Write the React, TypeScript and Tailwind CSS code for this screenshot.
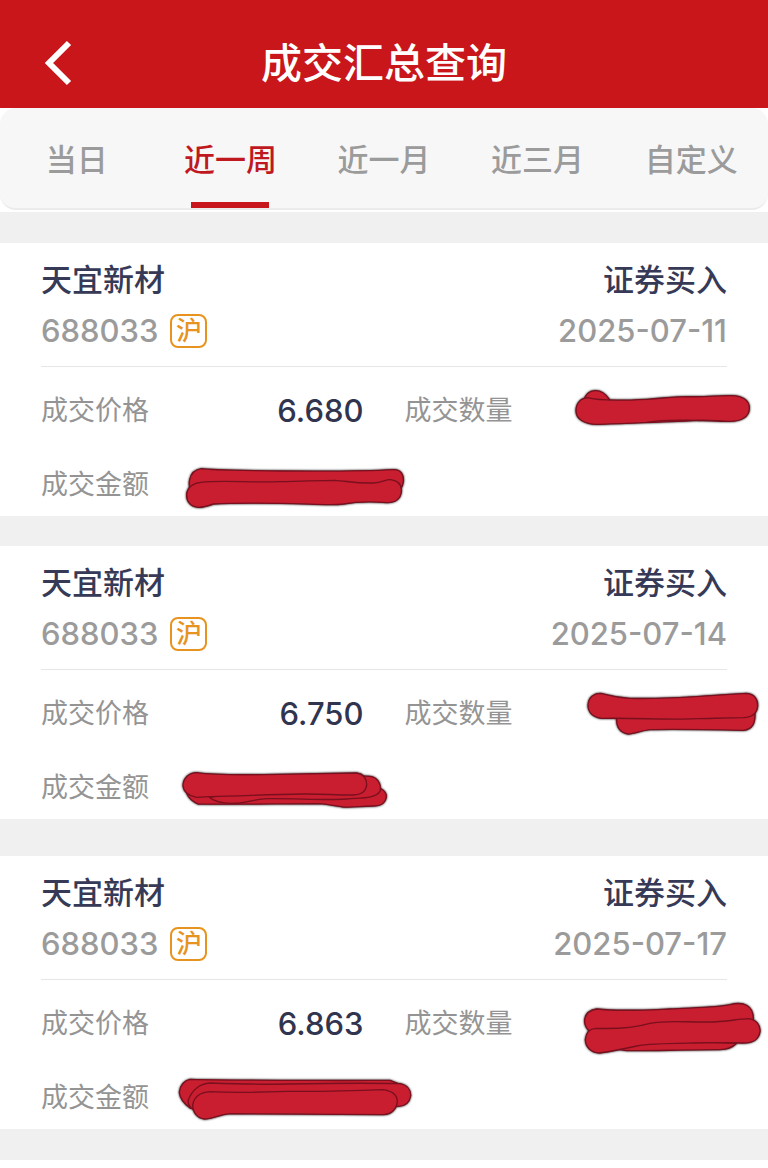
import React, { useState } from "react";

type Stroke = { d: string; seam?: boolean };
type Mark = { dx: number; dy: number; strokes: Stroke[] };

type Trade = {
  name: string;
  code: string;
  side: string;
  date: string;
  price: string;
  quantityMark: Mark;
  amountMark: Mark;
};

const TABS = ["当日", "近一周", "近一月", "近三月", "自定义"];

const TRADES: Trade[] = [
  {
    name: "天宜新材",
    code: "688033",
    side: "证券买入",
    date: "2025-07-11",
    price: "6.680",
    quantityMark: {
      dx: 0,
      dy: 0,
      strokes: [
        { d: "M72 60 C82 26 122 20 148 58 L140 80 L80 80 Z" },
        { d: "M82 53 C120 64 200 61 260 58 C320 54 340 50 390 50 C440 52 470 46 515 47 C550 48 569 62 568 86 C567 110 545 124 510 124 C470 124 440 118 400 122 C330 126 180 130 110 133 C75 133 48 118 48 92 C48 70 62 55 82 53 Z" },
        { d: "M260 127 C320 117 370 121 410 121 C440 124 460 119 490 124", seam: true },
      ],
    },
    amountMark: {
      dx: 0,
      dy: 3,
      strokes: [
        { d: "M95 41 C120 46 220 46 330 48 C450 49 600 48 670 44 C695 43 702 62 700 80 C698 100 690 110 670 112 L70 116 C50 100 52 46 95 41 Z" },
        { d: "M92 82 C160 74 240 84 330 80 C400 79 450 76 495 76 C540 80 560 85 610 84 C640 82 645 73 662 74 C688 78 696 92 694 110 C692 132 675 144 650 143 C600 139 560 140 520 147 C480 152 420 146 330 145 C250 144 180 144 130 147 C110 154 100 157 85 157 C62 155 49 140 50 118 C52 98 68 84 92 82 Z" },
      ],
    },
  },
  {
    name: "天宜新材",
    code: "688033",
    side: "证券买入",
    date: "2025-07-14",
    price: "6.750",
    quantityMark: {
      dx: 30,
      dy: -9,
      strokes: [
        { d: "M140 112 L555 98 C556 130 548 148 520 151 C420 149 320 147 240 149 C210 152 195 162 175 162 C150 158 138 140 140 112 Z" },
        { d: "M92 40 C115 45 130 53 180 55 C300 59 400 46 530 40 C553 42 564 58 563 78 C561 102 545 112 520 113 C480 113 430 115 380 116 C290 121 210 113 95 115 C70 112 54 98 54 76 C55 54 70 40 92 40 Z" },
      ],
    },
    amountMark: {
      dx: 0,
      dy: 9,
      strokes: [
        { d: "M50 100 L580 70 C625 80 650 88 649 110 C646 132 632 139 605 138 C570 139 545 143 520 141 C495 138 480 133 450 131 C350 131 170 134 85 132 C68 126 56 114 50 100 Z" },
        { d: "M118 112 C135 128 170 132 210 129 C245 124 255 118 290 116 C370 114 460 122 530 117 C575 113 615 116 630 94 C636 72 620 50 600 49 L560 47 Z" },
        { d: "M80 38 C120 44 200 45 280 44 C380 43 470 40 560 39 C584 42 590 58 590 75 C588 95 574 104 550 105 C500 106 460 101 400 102 C300 103 220 108 120 110 L80 112 C57 108 39 95 39 75 C41 54 56 39 80 38 Z" },
      ],
    },
  },
  {
    name: "天宜新材",
    code: "688033",
    side: "证券买入",
    date: "2025-07-17",
    price: "6.863",
    quantityMark: {
      dx: 0,
      dy: -9,
      strokes: [
        { d: "M160 176 L270 150 L530 160 C515 175 500 179 480 179 C380 179 260 183 200 182 Z" },
        { d: "M110 57 C180 65 260 60 330 57 C400 53 470 53 510 44 C550 34 582 45 580 90 L560 110 L90 125 C66 105 66 64 110 57 Z" },
        { d: "M108 115 C160 117 220 114 270 100 C320 90 380 97 440 96 C500 96 530 87 565 86 C588 88 602 105 600 125 C596 150 580 159 550 159 C500 157 440 158 400 159 C320 160 270 160 230 168 C190 177 160 183 118 189 C92 188 76 170 76 148 C78 128 90 116 108 115 Z" },
      ],
    },
    amountMark: {
      dx: 0,
      dy: -6,
      strokes: [
        { d: "M60 43 C180 46 320 46 440 46 C520 47 600 46 660 46 L690 58 L690 110 L62 130 C40 115 30 100 28 82 C30 60 44 46 60 43 Z" },
        { d: "M120 54 C220 58 260 59 350 57 C460 55 570 53 690 56 C712 60 723 75 722 93 C718 114 705 125 682 124 L80 140 C60 130 52 118 55 105 C66 75 90 56 120 54 Z" },
        { d: "M120 80 C200 84 270 82 350 79 C440 80 540 78 640 74 C672 79 682 92 682 110 C680 132 665 148 640 149 C500 147 340 146 180 146 C145 149 130 162 103 162 C83 160 68 143 68 120 C72 96 90 82 120 80 Z" },
      ],
    },
  },
];

function Scribble({ mark, wide }: { mark: Mark; wide?: boolean }) {
  return (
    <svg
      aria-hidden="true"
      viewBox={wide ? "0 0 780 186" : "0 0 624 186"}
      className={
        wide
          ? "absolute top-0 left-[129px] h-[62px] w-[260px] overflow-visible drop-shadow-[0_0_1px_rgba(0,0,0,0.9)]"
          : "absolute top-0 -right-[41px] h-[62px] w-[208px] overflow-visible drop-shadow-[0_0_1px_rgba(0,0,0,0.9)]"
      }
    >
      <g transform={`translate(${mark.dx} ${mark.dy})`}>
        {mark.strokes.map((s) => (
          <path
            key={s.d}
            d={s.d}
            fill={s.seam ? "none" : "#c81e30"}
            stroke="#7a0f1e"
            strokeWidth="4"
            strokeLinejoin="round"
          />
        ))}
      </g>
    </svg>
  );
}

function TradeCard({ trade }: { trade: Trade }) {
  return (
    <article className="bg-white px-[41px] pt-3">
      <div className="border-b border-[#e6e6e6] pb-[9px]">
        <div className="flex items-center justify-between text-[31px] leading-[50px] font-medium text-[#363a56]">
          <h2>{trade.name}</h2>
          <span>{trade.side}</span>
        </div>
        <div className="flex items-center justify-between text-[31px] leading-[52px] font-medium text-[#9b9b9b]">
          <div className="flex items-center gap-3">
            <span>{trade.code}</span>
            <span className="flex h-[34px] w-[37px] items-center justify-center rounded-lg border-2 border-[#e6941f] text-[26px] leading-none text-[#e6941f]">
              沪
            </span>
          </div>
          <time dateTime={trade.date}>{trade.date}</time>
        </div>
      </div>
      <dl className="grid grid-cols-2 gap-x-[41px] gap-y-3 pt-[13px] text-[27px] leading-[62px] text-[#949494]">
        <div className="flex items-center justify-between">
          <dt>成交价格</dt>
          <dd className="text-[31px] font-medium text-[#30344f]">{trade.price}</dd>
        </div>
        <div className="relative flex items-center justify-between">
          <dt>成交数量</dt>
          <dd>
            <Scribble mark={trade.quantityMark} />
          </dd>
        </div>
        <div className="relative flex items-center justify-between">
          <dt>成交金额</dt>
          <dd>
            <Scribble mark={trade.amountMark} wide />
          </dd>
        </div>
      </dl>
    </article>
  );
}

export default function App() {
  const [active, setActive] = useState(1);

  return (
    <div className="overflow-x-hidden bg-white font-['Inter','Noto_Sans_CJK_SC',sans-serif]">
      <header className="grid h-[108px] grid-cols-[1fr_auto_1fr] items-center bg-[#c8161b] px-10 pt-[18px]">
        <button type="button" aria-label="返回" className="flex w-9 justify-center">
          <svg viewBox="0 0 36 48" className="h-12 w-9" fill="none" stroke="#fff" strokeWidth="6">
            <path d="M29 4 L9 24 L29 44" />
          </svg>
        </button>
        <h1 className="text-[41px] leading-[60px] font-medium text-white">成交汇总查询</h1>
      </header>

      <nav className="bg-white pb-0.5">
        <div
          role="tablist"
          className="grid h-[102px] grid-cols-5 rounded-2xl border-b-2 border-[#ebebeb] bg-[#f7f7f7]"
        >
          {TABS.map((tab, i) => (
            <button
              key={tab}
              type="button"
              role="tab"
              aria-selected={i === active}
              onClick={() => setActive(i)}
              className={
                i === active
                  ? "flex flex-col items-center justify-between pt-[27px] text-[31px] leading-[50px] font-medium text-[#c0181f]"
                  : "flex flex-col items-center justify-between pt-[27px] text-[31px] leading-[50px] font-medium text-[#9b9b9b]"
              }
            >
              {tab}
              {i === active && <span className="h-1.5 w-[78px] bg-[#c8161d]" />}
            </button>
          ))}
        </div>
      </nav>

      <main className="flex flex-col gap-[30px] bg-[#f0f0f0] py-[31px]">
        {TRADES.slice(0, 2).map((t) => (
          <TradeCard key={t.date} trade={t} />
        ))}
        <div className="pt-[7px]">
          <TradeCard trade={TRADES[2]} />
        </div>
      </main>
    </div>
  );
}
